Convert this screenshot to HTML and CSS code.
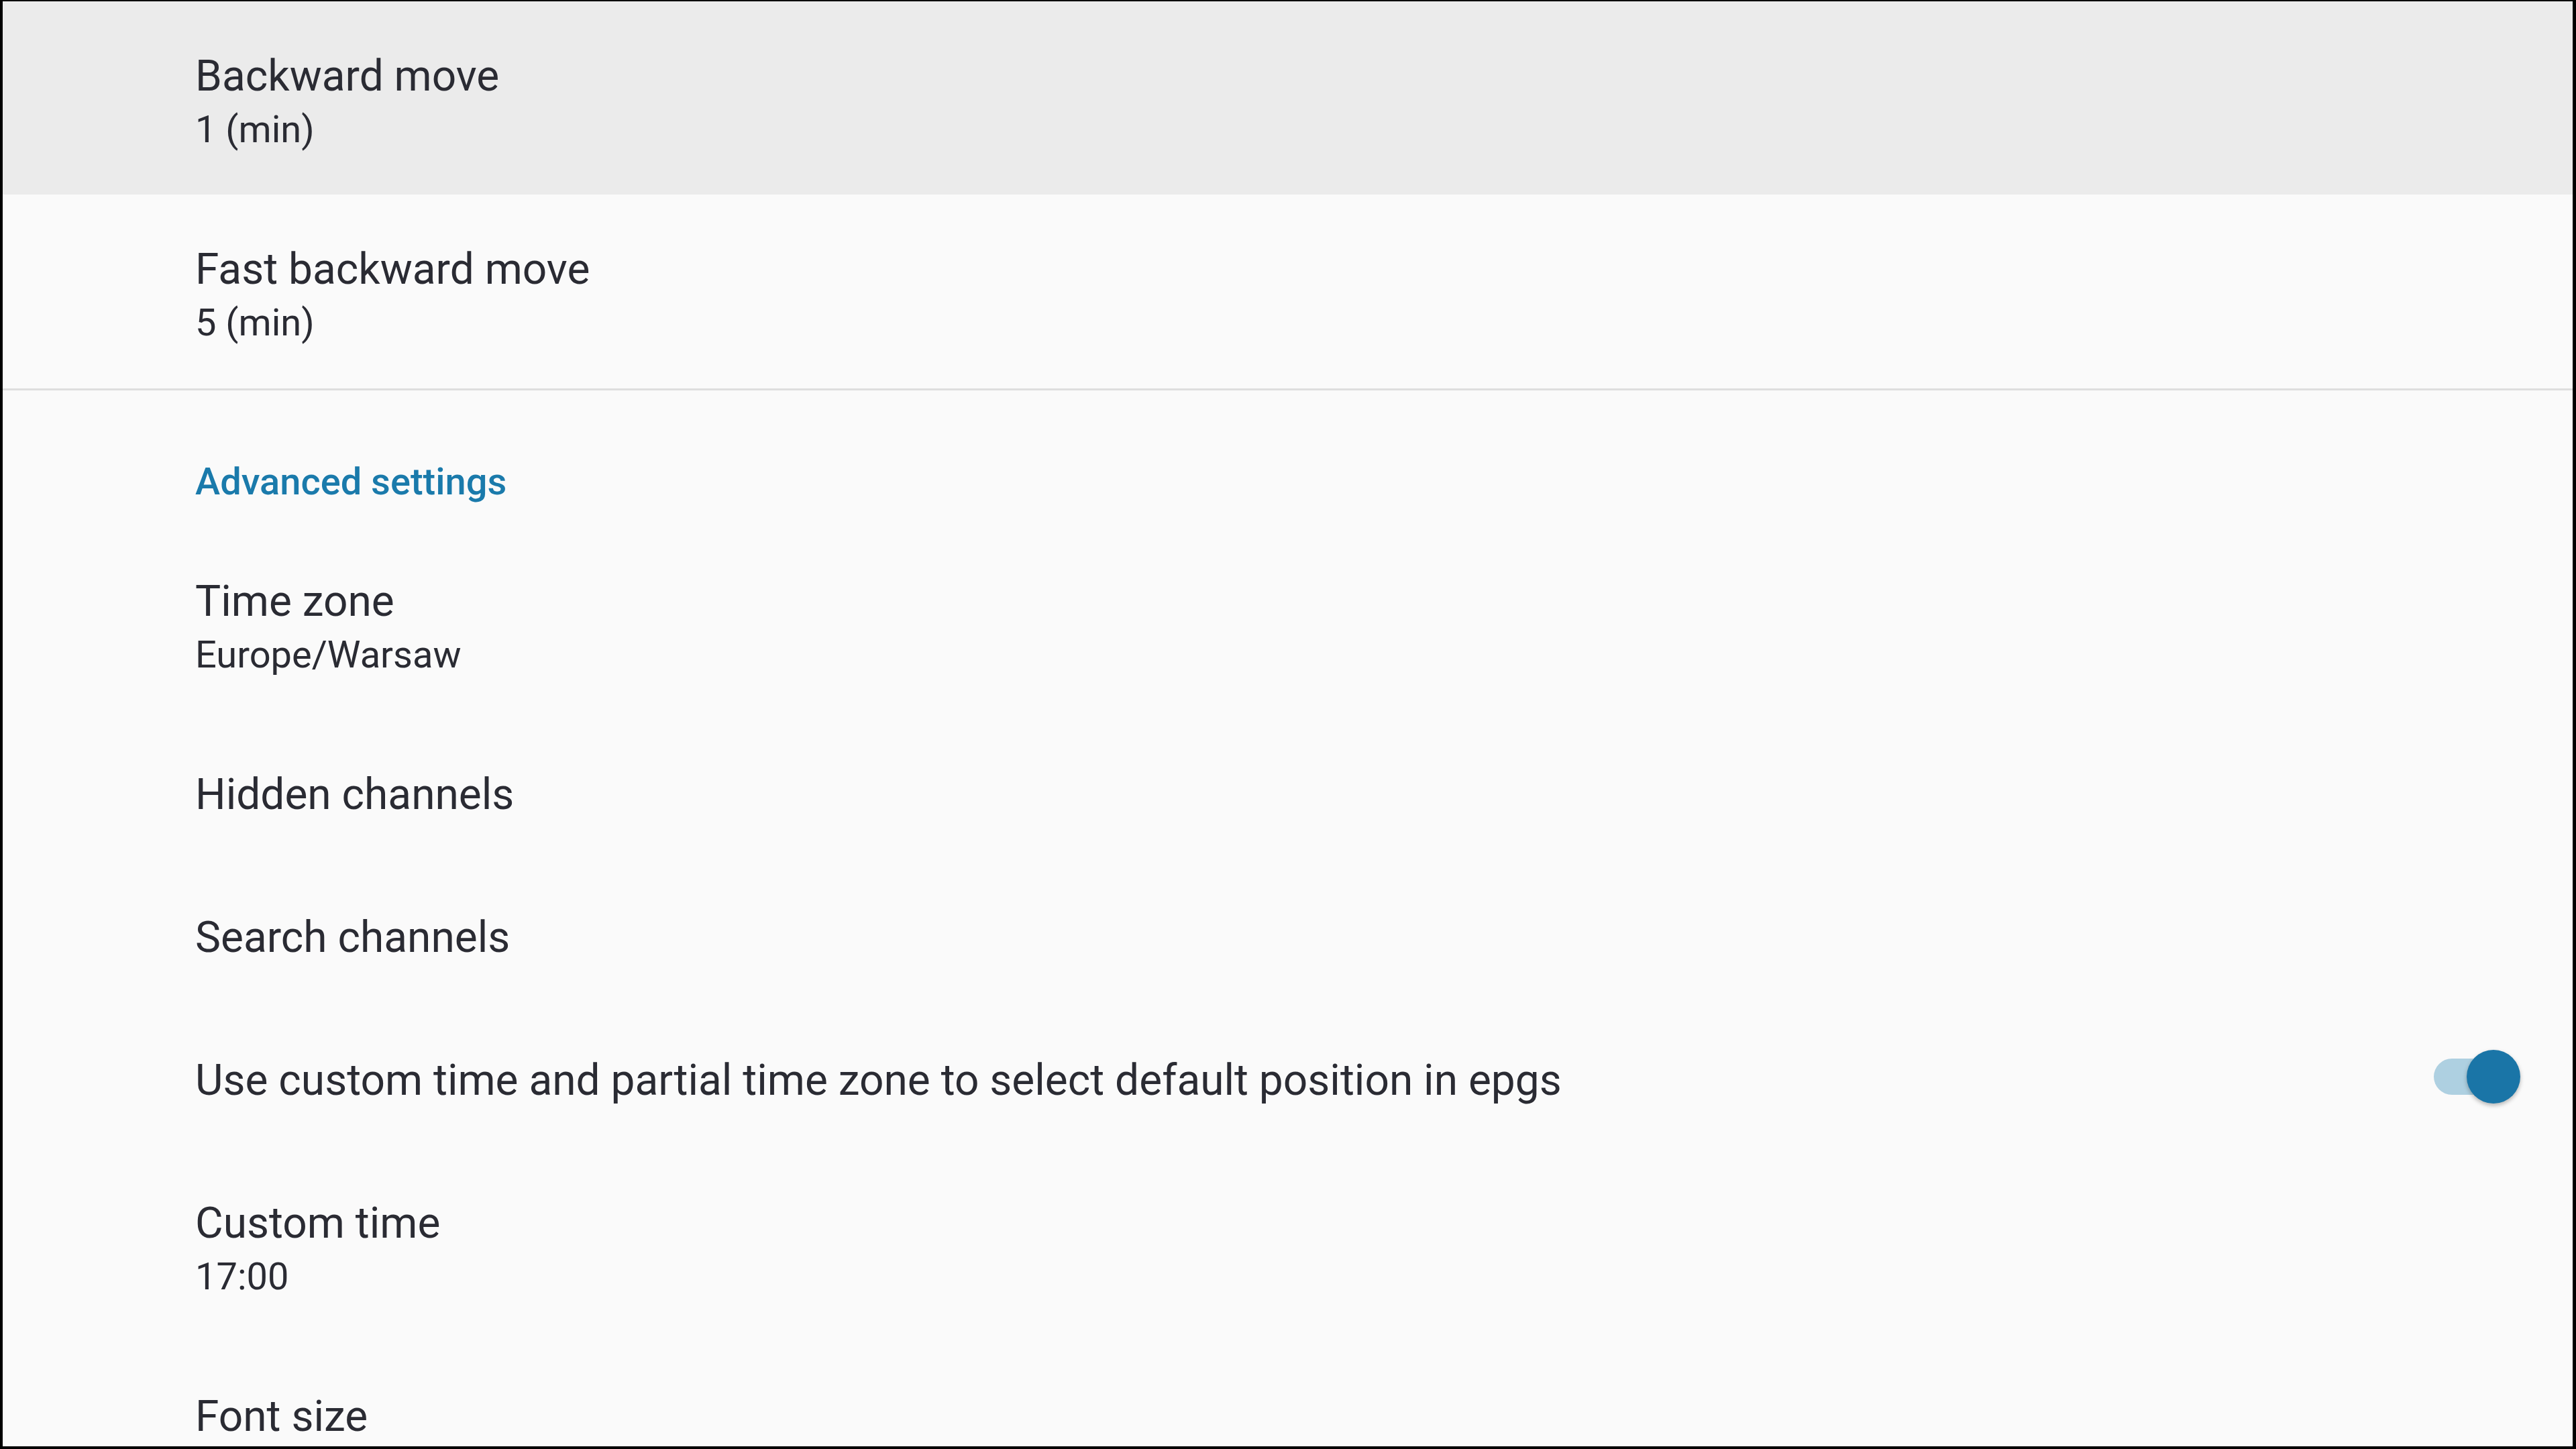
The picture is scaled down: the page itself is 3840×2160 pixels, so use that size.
FILE: index.html
```html
<!DOCTYPE html>
<html lang="en">
<head>
<meta charset="utf-8">
<title>Settings</title>
<link rel="stylesheet" href="styles.css">
</head>
<body>
<div class="screen">
  <div class="list">
    <div class="pref focused">
      <div class="pref-text">
        <div class="pref-title">Backward move</div>
        <div class="pref-summary">1 (min)</div>
      </div>
    </div>
    <div class="pref">
      <div class="pref-text">
        <div class="pref-title">Fast backward move</div>
        <div class="pref-summary">5 (min)</div>
      </div>
    </div>
    <div class="divider"></div>
    <div class="category">Advanced settings</div>
    <div class="pref">
      <div class="pref-text">
        <div class="pref-title">Time zone</div>
        <div class="pref-summary">Europe/Warsaw</div>
      </div>
    </div>
    <div class="pref">
      <div class="pref-text">
        <div class="pref-title">Hidden channels</div>
      </div>
    </div>
    <div class="pref">
      <div class="pref-text">
        <div class="pref-title">Search channels</div>
      </div>
    </div>
    <div class="pref pref-switch">
      <div class="pref-text">
        <div class="pref-title">Use custom time and partial time zone to select default position in epgs</div>
      </div>
      <div class="switch on">
        <div class="switch-track"></div>
        <div class="switch-thumb"></div>
      </div>
    </div>
    <div class="pref">
      <div class="pref-text">
        <div class="pref-title">Custom time</div>
        <div class="pref-summary">17:00</div>
      </div>
    </div>
    <div class="pref">
      <div class="pref-text">
        <div class="pref-title">Font size</div>
      </div>
    </div>
  </div>
</div>
</body>
</html>
```

FILE: styles.css
```css
html, body {
  margin: 0;
  padding: 0;
  background: #000;
}

.screen {
  width: 3840px;
  height: 2160px;
  box-sizing: border-box;
  border-style: solid;
  border-color: #000;
  border-width: 2px 5px 4px 4px;
  background: #fafafa;
  overflow: hidden;
  font-family: Roboto, "Noto Sans", "Liberation Sans", sans-serif;
  color: #2a2b33;
}

.list {
  display: flex;
  flex-direction: column;
}

.pref {
  display: flex;
  align-items: center;
  padding: 70px 78px 59px 287px;
}

.pref.focused {
  background: #ebebeb;
}

.pref-text {
  display: flex;
  flex-direction: column;
  flex: 1;
}

.pref-title {
  font-size: 64px;
  line-height: 84px;
  white-space: nowrap;
}

.pref-summary {
  font-size: 56px;
  line-height: 75px;
  white-space: nowrap;
}

.divider {
  margin-top: 1px;
  height: 3px;
  background: #dedede;
}

.category {
  padding: 99px 0 29px 287px;
  font-size: 56px;
  line-height: 75px;
  font-weight: 500;
  color: #1a7aab;
}

.switch {
  position: relative;
  width: 129px;
  height: 80px;
  flex: none;
  margin-top: -12px;
}

.switch-track {
  position: absolute;
  left: 0;
  top: 13px;
  width: 110px;
  height: 54px;
  border-radius: 27px;
  background: #aed0e1;
}

.switch-thumb {
  position: absolute;
  right: 0;
  top: 0;
  width: 80px;
  height: 80px;
  border-radius: 50%;
  background: #1a75a7;
  box-shadow: 0 3px 6px rgba(0, 0, 0, 0.28);
}
```
